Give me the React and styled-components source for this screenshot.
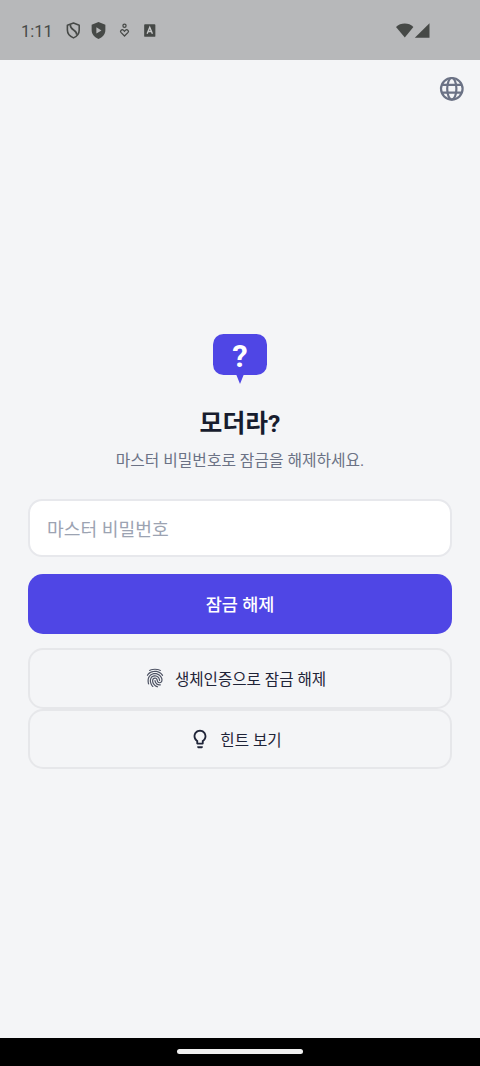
import { MdOutlineLightbulb } from "react-icons/md";
import { IoFingerPrint } from "react-icons/io5";
import styled, { createGlobalStyle } from "styled-components";

const GlobalStyle = createGlobalStyle`
  * {
    box-sizing: border-box;
  }
  body {
    margin: 0;
    background: #f4f5f7;
    font-family: Roboto, "Noto Sans CJK KR", sans-serif;
  }
`;
const Container = styled.div`
  display: flex;
  flex-direction: column;
  height: 1066px;
  background: #f4f5f7;
`;
const StatusBar = styled.header`
  display: flex;
  align-items: center;
  justify-content: space-between;
  height: 60px;
  padding: 1px 50px 0 21px;
  background: #b7b8ba;
  color: #464947;
`;
const StatusGroup = styled.div`
  display: flex;
  align-items: center;
  svg {
    display: block;
  }
`;
const Time = styled.span`
  width: 43.5px;
  padding-top: 2px;
  font-size: 16.5px;
  line-height: 20px;
`;
const StatusIcon = styled.svg`
  width: 17px;
  height: 19px;
  margin-right: ${(props) => props.$gap || 0}px;
`;
const TopBar = styled.nav`
  display: flex;
  justify-content: flex-end;
  padding: 15px 14px 0 0;
  height: 56px;
`;
const IconButton = styled.button`
  display: flex;
  width: 28px;
  height: 28px;
  padding: 0;
  border: none;
  background: none;
  color: #6b7285;
`;
const Content = styled.main`
  flex: 1;
  display: flex;
  flex-direction: column;
  align-items: center;
  padding: 218px 28px 0;
`;
const Logo = styled.svg`
  display: block;
  width: 54px;
  height: 50px;
`;
const Title = styled.h1`
  margin: 22px 0 0;
  font-size: 24.8px;
  line-height: 36px;
  font-weight: 700;
  color: #171c2e;
`;
const Subtitle = styled.p`
  margin: 7px 0 0;
  font-size: 15.8px;
  line-height: 24px;
  color: #6b7285;
`;
const PasswordInput = styled.input`
  width: 100%;
  height: 58px;
  margin-top: 26px;
  padding: 2px 17px 0;
  border: 2px solid #e7e8ec;
  border-radius: 14px;
  outline: none;
  background: white;
  font-family: inherit;
  font-size: 18.2px;
  &::placeholder {
    color: #9ca3b2;
    opacity: 1;
  }
`;
const UnlockButton = styled.button`
  width: 100%;
  height: 60px;
  margin: 17px 0 14px;
  padding: 0 0 2px;
  border: none;
  border-radius: 15px;
  background: #4f46e5;
  color: white;
  font-family: inherit;
  font-size: 17.5px;
  font-weight: 500;
`;
const OutlineButton = styled.button`
  display: flex;
  align-items: center;
  justify-content: center;
  gap: ${(props) => props.$gap}px;
  width: 100%;
  height: 60.5px;
  padding: 0 9px 0 0;
  border: 2px solid #e6e7ea;
  border-radius: 15px;
  background: transparent;
  color: #1f2438;
  font-family: inherit;
  font-size: 15.6px;
`;
const NavigationBar = styled.footer`
  display: flex;
  justify-content: center;
  height: 28px;
  padding-top: 11px;
  background: black;
`;
const HomeIndicator = styled.div`
  width: 126px;
  height: 5px;
  border-radius: 3px;
  background: #f0f0f0;
`;

function App() {
  return (
    <Container>
      <GlobalStyle />
      <StatusBar>
        <StatusGroup>
          <Time>1:11</Time>
          <StatusIcon viewBox="0 0 16 18" $gap={8}>
            <path
              d="M8 2 L13.4 4 V8.5 C13.4 12 11 14.7 8 16 C5 14.7 2.2 12 2.2 8.5 V4 Z"
              fill="none"
              stroke="currentColor"
              strokeWidth="1.5"
              strokeLinejoin="round"
            />
            <path
              d="M5 3.5 C4.6 9 11.4 8 11 13"
              fill="none"
              stroke="currentColor"
              strokeWidth="1.5"
            />
          </StatusIcon>
          <StatusIcon viewBox="0 0 16 18" $gap={9}>
            <path
              d="M8 1 L14.5 3.5 V8.5 C14.5 12.5 11.8 15.6 8 17 C4.2 15.6 1.5 12.5 1.5 8.5 V3.5 Z"
              fill="currentColor"
            />
            <path d="M6 6 L10.8 8.9 L6 11.8 Z" fill="#b7b8ba" />
          </StatusIcon>
          <StatusIcon viewBox="0 0 16 18" $gap={9}>
            <circle
              cx="8"
              cy="4.5"
              r="1.5"
              fill="none"
              stroke="currentColor"
              strokeWidth="1.2"
            />
            <path
              d="M8 14.2 L4.6 10.8 C3.4 9.5 5.6 7.3 7 8.7 L8 9.8 L9 8.7 C10.4 7.3 12.6 9.5 11.4 10.8 Z"
              fill="none"
              stroke="currentColor"
              strokeWidth="1.2"
            />
          </StatusIcon>
          <StatusIcon viewBox="0 0 16 18">
            <rect x="2" y="3" width="10.6" height="12" rx="0.8" fill="currentColor" />
            <path
              d="M4.8 12 L7.3 6 L9.8 12 M5.8 10 H8.8"
              fill="none"
              stroke="#c8c9ca"
              strokeWidth="1.3"
            />
          </StatusIcon>
        </StatusGroup>
        <StatusGroup>
          <svg width="34" height="16" viewBox="0 0 34 16">
            <path
              d="M0 4 C4.5 -0.6 13 -0.6 17.4 4 L8.8 14.6 Z"
              fill="currentColor"
            />
            <path d="M18.8 14.8 L33.5 0.3 V14.8 Z" fill="currentColor" />
          </svg>
        </StatusGroup>
      </StatusBar>
      <TopBar>
        <IconButton>
          <svg
            width="28"
            height="28"
            viewBox="0 0 28 28"
            fill="none"
            stroke="currentColor"
            strokeWidth="2.2"
          >
            <circle cx="13.8" cy="13.8" r="10.8" />
            <ellipse cx="13.8" cy="13.8" rx="4.6" ry="10.8" />
            <path d="M3.8 9.9 H23.8 M3.8 17.7 H23.8" />
          </svg>
        </IconButton>
      </TopBar>
      <Content>
        <Logo viewBox="0 0 54 50">
          <rect width="54" height="41" rx="10.5" fill="#4f46e5" />
          <path d="M23 40 H31 L27 50 Z" fill="#4f46e5" />
          <text
            x="27"
            y="32.5"
            textAnchor="middle"
            fontFamily="Roboto, sans-serif"
            fontSize="31"
            fontWeight="700"
            fill="white"
          >
            ?
          </text>
        </Logo>
        <Title>모더라?</Title>
        <Subtitle>마스터 비밀번호로 잠금을 해제하세요.</Subtitle>
        <PasswordInput type="password" placeholder="마스터 비밀번호" />
        <UnlockButton>잠금 해제</UnlockButton>
        <OutlineButton $gap={10}>
          <IoFingerPrint size={20} color="#4d5263" />
          생체인증으로 잠금 해제
        </OutlineButton>
        <OutlineButton $gap={9}>
          <MdOutlineLightbulb size={22} />
          힌트 보기
        </OutlineButton>
      </Content>
      <NavigationBar>
        <HomeIndicator />
      </NavigationBar>
    </Container>
  );
}

export default App;
